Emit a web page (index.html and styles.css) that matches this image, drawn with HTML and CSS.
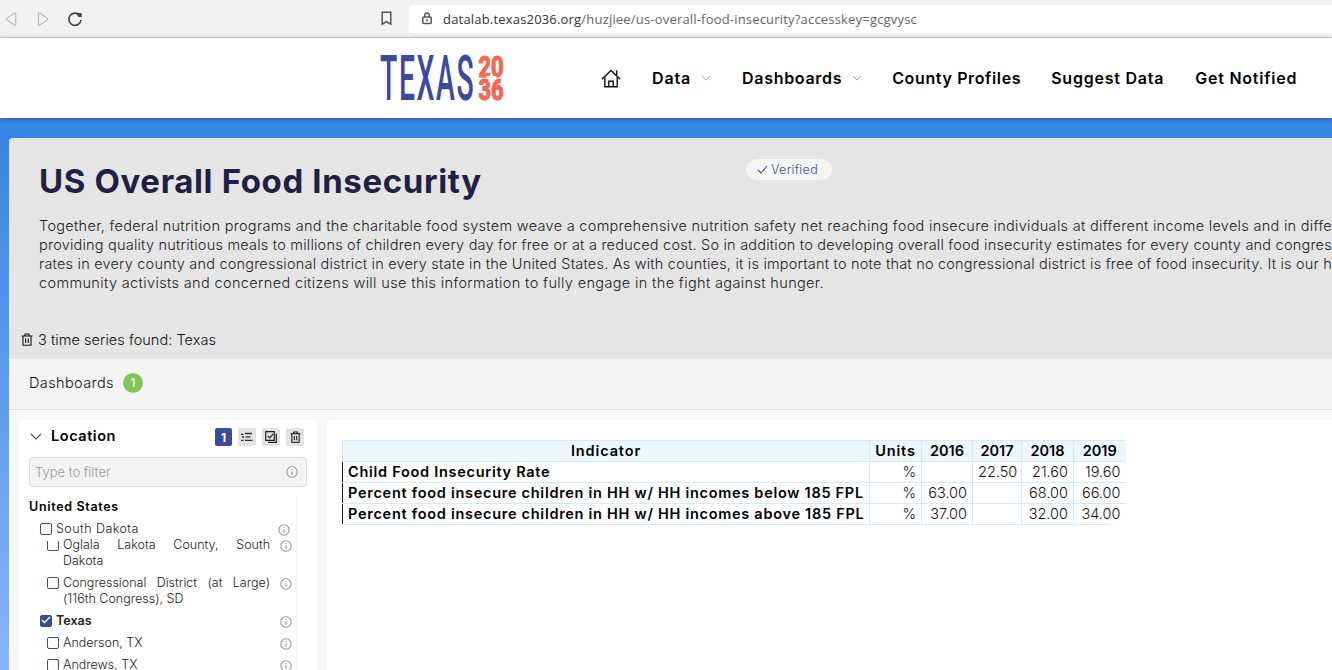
FILE: index.html
```html
<!DOCTYPE html>
<html lang="en">
<head>
<meta charset="utf-8">
<title>US Overall Food Insecurity</title>
<link rel="stylesheet" href="styles.css">
</head>
<body>
<svg class="defs" width="0" height="0">
  <symbol id="info" viewBox="0 0 12 12"><circle cx="6" cy="6" r="5.2" fill="none" stroke="currentColor" stroke-width="1.1"/><path d="M6 5.2v3.6M6 3v1.1" stroke="currentColor" stroke-width="1.2"/></symbol>
  <symbol id="trash" viewBox="0 0 12 13"><path d="M.5 3h11M4 2.8V1h4v1.8M2 3.5v8.7h8V3.5M4.7 5.5v4.6M7.3 5.5v4.6" fill="none" stroke="currentColor" stroke-width="1.1"/></symbol>
  <symbol id="down" viewBox="0 0 12 7"><path d="M1 1l5 5 5-5" fill="none" stroke="currentColor" stroke-width="1.1"/></symbol>
</svg>
<div class="browser">
  <svg class="nav-icons" width="90" height="38" viewBox="0 0 90 38" fill="none">
    <path d="M6.800 18.400 14.400 13q1.300-.6 1.300.8v10.400q0 1.400-1.300.8L6.800 19.800q-.8-.7 0-1.400z" stroke="#bdbdbd" stroke-width="1.2"/>
    <path d="M47.400 18.400 39.800 13q-1.300-.6-1.300.8v10.400q0 1.400 1.300.8l7.600-5.200q.8-.7 0-1.400z" stroke="#bdbdbd" stroke-width="1.2"/>
    <path d="M79.500 15.200A6.100 6.100 0 1 0 81 20" stroke="#444" stroke-width="1.6"/><path d="M77 13h3.500q1.300 0 1.300 1.300V17h-2.600q-2 0-2-2z" fill="#444"/>
  </svg>
  <svg class="bookmark" width="11" height="15" viewBox="0 0 11 15"><path d="M1.200 1.200h8.600v12L5.500 10.600l-4.300 2.600z" fill="none" stroke="#555" stroke-width="1.5"/></svg>
  <div class="address">
    <svg width="10" height="13" viewBox="0 0 10 13"><path d="M2.700 5V3.300a2.300 2.300 0 0 1 4.600 0V5" fill="none" stroke="#555" stroke-width="1.4"/><rect x=".8" y="5" width="8.400" height="6.600" rx="1" fill="none" stroke="#555" stroke-width="1.5"/><circle cx="5" cy="8.300" r="1" fill="#555"/></svg>
    <span class="url"><span class="host">datalab.texas2036.org</span>/huzjiee/us-overall-food-insecurity?accesskey=gcgvysc</span>
  </div>
</div>
<header class="site">
  <svg class="logo" width="126" height="50" viewBox="0 0 126 50">
    <text class="logo-name" transform="translate(0 47) scale(.45 1)" textLength="208" lengthAdjust="spacing">TEXAS</text>
    <text class="logo-year" transform="translate(98.500 24.200) scale(.72 1)" textLength="35" lengthAdjust="spacingAndGlyphs">20</text>
    <text class="logo-year" transform="translate(98.500 46.800) scale(.72 1)" textLength="35" lengthAdjust="spacingAndGlyphs">36</text>
    <path d="M111.300 19.500l1.400 3.600 3.900.2-3 2.400 1 3.800-3.300-2.100-3.300 2.100 1-3.800-3-2.400 3.900-.2z" fill="#fff"/>
  </svg>
  <nav class="menu">
    <svg class="home" width="20" height="19" viewBox="0 0 20 19" fill="none" stroke="#111" stroke-width="1.4"><path d="M.8 10.200 10 1.500l9.200 8.700M3.800 8.200v9.600h12.400V8.200M7.800 17.500v-5.200h4.400v5.200M15.700 6V1.200"/></svg>
    <a class="m-data">Data<svg width="10" height="6"><use href="#down"/></svg></a>
    <a class="m-dash">Dashboards<svg width="10" height="6"><use href="#down"/></svg></a>
    <a class="m-county">County Profiles</a>
    <a class="m-suggest">Suggest Data</a>
    <a class="m-notify">Get Notified</a>
  </nav>
</header>
<main class="backdrop">
  <div class="panel">
    <section class="intro">
      <div class="title-row">
        <h1>US Overall Food Insecurity</h1>
        <div class="verified"><svg width="11" height="9" viewBox="0 0 11 9"><path d="M1 5l3 3 6-7" fill="none" stroke="#3b4a9f" stroke-width="1.1"/></svg>Verified</div>
      </div>
      <p class="about">
        <span class="l1">Together, federal nutrition programs and the charitable food system weave a comprehensive nutrition safety net reaching food insecure individuals at different income levels and in diffe</span>
        <span class="l2">providing quality nutritious meals to millions of children every day for free or at a reduced cost. So in addition to developing overall food insecurity estimates for every county and congres</span>
        <span class="l3">rates in every county and congressional district in every state in the United States. As with counties, it is important to note that no congressional district is free of food insecurity. It is our h</span>
        <span class="l4">community activists and concerned citizens will use this information to fully engage in the fight against hunger.</span>
      </p>
      <div class="found"><svg width="12" height="13"><use href="#trash"/></svg><span>3 time series found: Texas</span></div>
    </section>
    <div class="tabs"><span class="tab">Dashboards</span><span class="count">1</span></div>
    <div class="content">
      <aside class="filters">
        <div class="filter-head">
          <svg class="chev" width="12" height="7"><use href="#down"/></svg>
          <span class="loc">Location</span>
          <span class="tool active">1</span>
          <span class="tool"><svg width="12" height="10" viewBox="0 0 12 10" stroke="#333" stroke-width="1.3"><path d="M0 2.300h2.500M1 5h2M0 8.300h2.500M4 1.500h7M4.500 4.900h5M4 8.300h7.500"/></svg></span>
          <span class="tool"><svg width="12" height="12" viewBox="0 0 12 12" fill="none" stroke="#222" stroke-width="1.2"><path d="M.7.7h8.600v8.600H.7zM11.300 2.500v8.800H3M2.700 4.800l2 2 3.500-4"/></svg></span>
          <span class="tool"><svg width="11" height="12" viewBox="0 0 12 13"><use href="#trash"/></svg></span>
        </div>
        <div class="search"><span>Type to filter</span><svg width="12" height="12"><use href="#info"/></svg></div>
        <div class="tree">
          <div class="country">United States</div>
          <div class="row state"><i class="box"></i><span class="sd">South Dakota</span><svg width="12" height="12"><use href="#info"/></svg></div>
          <div class="row item two under"><i class="box"></i><span class="name">Oglala Lakota County, South Dakota</span><svg width="12" height="12"><use href="#info"/></svg></div>
          <div class="row item two"><i class="box"></i><span class="name">Congressional District (at Large) (116th Congress), SD</span><svg width="12" height="12"><use href="#info"/></svg></div>
          <div class="row state tx"><i class="box on"><svg width="10" height="8" viewBox="0 0 10 8"><path d="M1 4l2.500 2.500L9 1" fill="none" stroke="#fff" stroke-width="1.4"/></svg></i><b>Texas</b><svg width="12" height="12"><use href="#info"/></svg></div>
          <div class="row item"><i class="box"></i><span>Anderson, TX</span><svg width="12" height="12"><use href="#info"/></svg></div>
          <div class="row item"><i class="box"></i><span>Andrews, TX</span><svg width="12" height="12"><use href="#info"/></svg></div>
        </div>
      </aside>
      <section class="data">
        <table>
          <colgroup><col class="c-ind"><col class="c-unit"><col class="c-16"><col class="c-17"><col class="c-18"><col class="c-19"></colgroup>
          <tr class="head"><th class="wide">Indicator</th><th class="wide">Units</th><th>2016</th><th>2017</th><th>2018</th><th>2019</th></tr>
          <tr><th>Child Food Insecurity Rate</th><td>%</td><td></td><td>22.50</td><td>21.60</td><td>19.60</td></tr>
          <tr><th>Percent food insecure children in HH w/ HH incomes below 185 FPL</th><td>%</td><td>63.00</td><td></td><td>68.00</td><td>66.00</td></tr>
          <tr><th>Percent food insecure children in HH w/ HH incomes above 185 FPL</th><td>%</td><td>37.00</td><td></td><td>32.00</td><td class="corner">34.00</td></tr>
        </table>
      </section>
    </div>
  </div>
</main>
</body>
</html>
```
FILE: styles.css
```css
* { box-sizing: border-box; }
html, body { margin: 0; height: 670px; overflow: hidden; }
body { display: flex; flex-direction: column; font-family: Inter, "Open Sans", sans-serif; font-size: 14.5px; font-weight: 300; color: #111; background: #fff; white-space: nowrap; }
svg { display: block; flex: none; }
.defs { position: absolute; }
.browser { flex: none; height: 38px; background: #f2f2f2; border-bottom: 1px solid #d2d2d2; display: flex; align-items: center; }
.bookmark { margin: 0 17px 0 291px; }
.address { flex: 1; height: 28px; background: #fff; border-radius: 4px 0 0 4px; display: flex; align-items: center; gap: 11px; padding-left: 13px; font: 400 13px "Open Sans", sans-serif; letter-spacing: .188px; color: #666; }
.host { color: #333; }
.site { flex: none; height: 80px; background: #fff; display: flex; align-items: center; padding-left: 380px; position: relative; box-shadow: 0 1px 5px rgba(0,0,0,.3); }
.logo { overflow: visible; }
.logo-name { font: 500 63px Roboto, sans-serif; fill: #3b4a9f; }
.logo-year { font: 800 30px Roboto, sans-serif; fill: #f26a55; stroke: #f26a55; stroke-width: 1.2px; }
.menu { display: flex; align-items: center; margin-left: 95px; font-size: 16px; font-weight: 600; letter-spacing: .7px; }
.menu a { display: flex; align-items: center; color: #000; }
.menu a svg { color: #999; margin-left: 10px; }
.m-data { margin-left: 31px; letter-spacing: .836px; }
.m-dash { margin-left: 31px; }
.m-county { margin-left: 30px; letter-spacing: .629px; }
.m-suggest { margin-left: 30px; letter-spacing: .766px; }
.m-notify { margin-left: 31px; letter-spacing: .767px; }
.backdrop { flex: 1; min-height: 0; padding: 20px 0 0 9px; background: linear-gradient(#3584e4, #85b6f8); }
.panel { height: 532px; background: #f7f7f7; border-radius: 4px 0 0 0; overflow: hidden; }
.intro { height: 221px; background: #e5e5e5; padding: 20px 0 0 30px; overflow: hidden; }
.title-row { display: flex; align-items: flex-start; }
h1 { margin: 0; width: 707px; font-size: 33px; line-height: 47px; font-weight: 700; letter-spacing: .63px; color: #211f44; }
.verified { display: flex; align-items: center; gap: 3px; margin-top: 1px; width: 86px; height: 21px; padding-left: 11px; border-radius: 11px; background: #f5f5f5; color: #3b4a9f; font-size: 12.5px; letter-spacing: .3px; }
.about { margin: 11px 0 0; font-size: 14.5px; line-height: 19px; color: #222; }
.about > span { display: block; }
.l1 { letter-spacing: .294px; }
.l2 { letter-spacing: .213px; }
.l3 { letter-spacing: .205px; }
.l4 { letter-spacing: .355px; }
.found { display: flex; align-items: center; gap: 5px; margin: 37px 0 0 -18px; height: 20px; letter-spacing: .045px; }
.tabs { height: 51px; background: #f4f4f4; border-bottom: 1px solid #e0e0e0; display: flex; align-items: center; padding: 0 0 2px 20px; gap: 9px; }
.tab { letter-spacing: .395px; margin-top: -2px; }
.count { width: 20px; height: 20px; border-radius: 50%; background: #82c55b; color: #fff; font-size: 12px; font-weight: 400; line-height: 20px; text-align: center; }
.content { display: flex; gap: 10px; padding: 10px 0 0 10px; }
.filters { width: 298px; height: 260px; background: #fff; border-radius: 4px; padding: 7px 10px 0; }
.filter-head { display: flex; align-items: center; height: 20px; padding-left: 1px; }
.filter-head .chev { color: #3b4a9f; margin: -2px 9px 0 0; }
.loc { flex: none; margin-top: -3px; font-size: 14.5px; font-weight: 600; letter-spacing: .55px; color: #000; width: 164px; }
.tool { width: 18px; height: 18px; margin-right: 6px; border-radius: 2px; background: #e3e3e3; display: flex; align-items: center; justify-content: center; flex: none; }
.tool.active { width: 17px; margin-right: 6px; background: #3b4a9f; color: #fff; font-size: 12px; font-weight: 700; }
.search { height: 30px; margin-top: 10px; border: 1px solid #dcdcdc; border-radius: 4px; background: #f3f3f3; display: flex; align-items: center; justify-content: space-between; padding: 0 8px 0 5px; color: #999; font-size: 13px; }
.tree { margin-top: 9px; width: 268px; height: 180px; border-right: 1px solid #f3f3f3; font-size: 12.5px; line-height: 16px; color: #222; }
.country { height: 22px; line-height: 22px; font-weight: 600; letter-spacing: .68px; color: #000; }
.row { display: flex; align-items: flex-start; height: 22px; padding: 3px 4px 0 11px; }
.row > svg { margin-left: auto; margin-top: 3px; color: #999; }
.state > svg { margin-right: 2px; }
.state > :nth-child(2) { margin-left: -1px; }
.tx > svg { margin-right: 0; }
.sd { letter-spacing: .45px; }
.tx b { font-weight: 600; }
.item { padding-left: 18px; }
.box { flex: none; width: 12px; height: 12px; margin: 2px 5px 0 0; border: 1px solid #3b4a9f; border-radius: 2px; background: #fff; }
.item .box { margin-right: 4px; }
.box.on { background: #3b4a9f; }
.two { height: 38px; }
.name { width: 207px; white-space: normal; text-align: justify; }
.under { margin-top: -6px; }
.under .box { clip-path: inset(2px 0 0 0); }
.data { flex: 1; height: 260px; background: #fff; border-radius: 4px 0 0 0; padding: 20px 0 0 15px; }
table { width: 783px; border-collapse: collapse; table-layout: fixed; font-size: 14.5px; }
.c-ind { width: 527px; } .c-unit { width: 52px; } .c-16 { width: 51px; } .c-17 { width: 49px; } .c-18 { width: 52px; } .c-19 { width: 52px; }
th, td { height: 21px; padding: 0 5px; line-height: 20px; border: 1px solid #d0edf7; }
th { font-weight: 600; text-align: left; letter-spacing: .72px; color: #000; }
td { text-align: right; }
th:last-child, td:last-child { border-right: 0; }
.head th { background: #ecf7fb; text-align: center; letter-spacing: 0; }
.head .wide { letter-spacing: .88px; }
tr:not(.head) th { border-left-color: #111; }
td.corner { border-bottom: 0; background: linear-gradient(#d0edf7, #d0edf7) 0 100% / 36px 1px no-repeat; }
```
